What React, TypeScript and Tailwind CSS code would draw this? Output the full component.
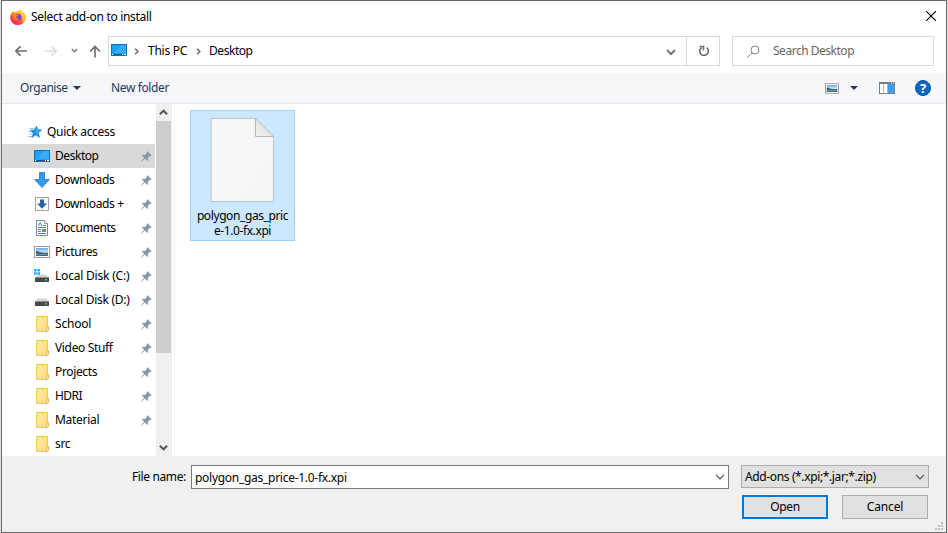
import React from 'react';

const Chevron = ({ d, color = '#555', w = 1.2, cls }: { d: 'down' | 'up' | 'right'; color?: string; w?: number; cls: string }) => (
  <svg viewBox="0 0 10 10" className={cls} fill="none" stroke={color} strokeWidth={w}>
    <path d={d === 'down' ? 'M1 3l4 4 4-4' : d === 'up' ? 'M1 7l4-4 4 4' : 'M3 1l4 4-4 4'} />
  </svg>
);

const Firefox = () => (
  <svg viewBox="0 0 16 16" className="h-4 w-4">
    <defs>
      <linearGradient id="fx" x1="0.8" y1="0" x2="0.2" y2="1">
        <stop offset="0" stopColor="#ffe83c" />
        <stop offset="0.4" stopColor="#ff9a1f" />
        <stop offset="0.75" stopColor="#ff3b47" />
        <stop offset="1" stopColor="#e81e85" />
      </linearGradient>
    </defs>
    <path d="M2.3 3.2L3.4 1.8l.5 1.7 2-.5L8.5 2 9.7 0c.5 1.8 2.2 2.3 3.6 3.7 1.2 0 2.6 2.6 2.6 4.8A7.9 7.5 0 0 1 .1 8.6C.1 6.6 1 4.8 2.3 3.2z" fill="url(#fx)" />
    <path d="M10.500.5c.8 1.500 2.300 2 3.300 3.700 2 2 2.300 5 1 7.300-.5 1-1.500 2-2.500 2.300 1.500-3.500.5-6-1.300-8z" fill="#ffd02f" opacity=".75" />
    <circle cx="8.2" cy="8.2" r="3.3" fill="#7b3ce0" />
    <path d="M3.4 5.5l3.500.2 1.600.8-1 1.100-1.600.5c.3 1.600 2.300 2 3.500 1-1 2.500-4 2.800-5.600.6z" fill="#ff8a1d" />
    <path d="M8.2 3.3c3 .2 4.600 2.600 3.700 5.500 1.900-2.200 1.500-5-.8-6.600L9.600 1z" fill="#ffd936" />
  </svg>
);

const Monitor = ({ cls = 'h-3 w-4' }: { cls?: string }) => (
  <svg viewBox="0 0 16 12" className={cls}>
    <rect x=".5" y=".5" width="15" height="11" fill="#1ba1fa" stroke="#0873b9" />
    <path d="M10 1h5v8H3z" fill="#35acfb" />
    <path d="M1 10.5h14" stroke="#075a92" />
    <path d="M1 10.5h1M11 10.5h1M13 10.5h2" stroke="#fff" />
  </svg>
);

const Star = () => (
  <svg viewBox="0 0 14 12" className="h-3 w-3.5">
    <path d="M1.500 2.500h5M0 5.500h4M1 8h3.500M0 10.500h4" stroke="#6db8e8" strokeWidth=".8" />
    <path d="M8.500 0l1.200 3.800 4.100.1-3.300 2.700.9 4.900-3.500-2.600-4.100 2.900 1.500-4.600-2.900-3 4.100-.2z" fill="#1b8fdc" stroke="#1b8fdc" strokeWidth=".6" />
    <path d="M8.300 2.500l.8 2.300 2.200.1-2 1.600.4 2.300-1.900-1.300z" fill="#46b2f2" />
  </svg>
);

const DownArrow = () => (
  <svg viewBox="0 0 16 16" className="h-4 w-4">
    <path d="M5.500.5h5v7h4.800L8 15.500.7 7.500h4.800z" fill="#3898e8" stroke="#2479bd" strokeWidth=".8" />
  </svg>
);

const DownBox = () => (
  <svg viewBox="0 0 16 16" className="h-4 w-4">
    <rect x="1.500" y="1.500" width="13" height="13" fill="#fafafa" stroke="#a3a3a3" />
    <path d="M6 3.500h4v4h3L8 12.800 3 7.500h3z" fill="#2c5fa3" />
  </svg>
);

const Doc = () => (
  <svg viewBox="0 0 16 16" className="h-4 w-4">
    <path d="M2.500.5h8l3 3v12h-11z" fill="#fff" stroke="#8a8a8a" />
    <path d="M10.500.5v3h3" fill="#eee" stroke="#8a8a8a" strokeWidth=".8" />
    <path d="M4.500 6l1.700-3.500L7.800 6M9 5.500h3M4 7.500h8M4 9.500h3M4 11.500h3M4 13.500h8" fill="none" stroke="#2b8fd0" />
    <path d="M8 9h4v3H8z" fill="#5d8fa8" />
  </svg>
);

const Picture = ({ cls = 'h-3 w-4' }: { cls?: string }) => (
  <svg viewBox="0 0 16 12" className={cls}>
    <defs>
      <linearGradient id="sky" x1="0" y1="0" x2="0" y2="1">
        <stop offset="0" stopColor="#62a8e8" />
        <stop offset=".55" stopColor="#d9eefa" />
        <stop offset="1" stopColor="#5089b9" />
      </linearGradient>
    </defs>
    <rect x=".5" y=".5" width="15" height="11" fill="#fff" stroke="#999" />
    <rect x="2" y="2" width="12" height="8" fill="url(#sky)" />
    <path d="M2 5c2-.5 3 1 5 1.300 2 .5 4 .5 7 .2v1.500H2z" fill="#3c665e" />
    <path d="M2 8.500h12V10H2z" fill="#376a9b" />
  </svg>
);

const Disk = ({ win = false }: { win?: boolean }) => (
  <svg viewBox="0 0 16 16" className="h-4 w-4">
    <path d="M4 6.500h8l3 3H1z" fill="#d3d3d3" />
    <rect x="1" y="9.500" width="14" height="4.500" rx=".7" fill="#474747" />
    <path d="M1.500 9.500h13" stroke="#888" strokeWidth=".8" />
    <rect x="11" y="11" width="2" height="1.500" fill="#35dc55" />
    {win && (
      <>
        <path d="M0 0h7v7H0z" fill="#fff" />
        <path d="M0 1h2.700v2.500H0zM3.400 1h2.700v2.500H3.400zM0 4.200h2.700v2.500H0zM3.400 4.200h2.700v2.500H3.400z" fill="#16b6f3" />
      </>
    )}
  </svg>
);

const Folder = () => (
  <svg viewBox="0 0 16 16" className="h-4 w-4">
    <defs>
      <linearGradient id="fold" x1="0" y1="0" x2="1" y2="1">
        <stop offset="0" stopColor="#ffeaa2" />
        <stop offset="1" stopColor="#fddd7c" />
      </linearGradient>
    </defs>
    <path d="M2.500.5h11v15h-11z" fill="url(#fold)" stroke="#ecc955" />
    <path d="M12.500 10.500h2v4l-1 1h-1z" fill="#ffe391" stroke="#e5bc3c" strokeWidth=".9" />
  </svg>
);

const Pin = () => (
  <svg viewBox="0 0 11 11" className="h-[11px] w-[11px]">
    <path d="M6.500.2l4 4-.8.9-1-.1-1.800 1.900.2 2.300-.9.6-2.300-2.300L.6 10.700l-.4-.4 3-3.500L.9 4.600l.7-.9 2.400.2 1.900-1.800-.2-1.100z" fill="#8a98a2" />
  </svg>
);

type Item = [string, React.ReactNode, string, boolean];
const items: Item[] = [
  ['Desktop', <Monitor />, 'tracking-[-0.45px]', true],
  ['Downloads', <DownArrow />, 'tracking-[-0.4px]', true],
  ['Downloads +', <DownBox />, 'tracking-[-0.38px]', true],
  ['Documents', <Doc />, 'tracking-[-0.45px]', true],
  ['Pictures', <Picture />, 'tracking-[-0.32px]', true],
  ['Local Disk (C:)', <Disk win />, 'tracking-[-0.2px]', true],
  ['Local Disk (D:)', <Disk />, 'tracking-[-0.27px]', true],
  ['School', <Folder />, 'tracking-[-0.2px]', true],
  ['Video Stuff', <Folder />, 'tracking-[-0.35px]', true],
  ['Projects', <Folder />, 'tracking-[-0.35px]', true],
  ['HDRI', <Folder />, 'tracking-[-0.55px]', true],
  ['Material', <Folder />, 'tracking-[-0.3px]', true],
  ['src', <Folder />, 'tracking-[-0.35px]', false],
];

function TitleBar() {
  return (
    <div className="flex h-[31px] items-center pl-[8px] pr-[10px]">
      <Firefox />
      <span className="ml-[5px] flex-1 tracking-[-0.3px]">Select add-on to install</span>
      <svg viewBox="0 0 10 10" className="mb-[2px] h-[10px] w-[10px]" stroke="#000" strokeWidth="1.1">
        <path d="M0 0l10 10M10 0L0 10" />
      </svg>
    </div>
  );
}

function AddressRow() {
  return (
    <div className="flex h-[41px] items-start pt-1">
      <div className="flex h-[30px] w-[106px] items-center">
        <svg viewBox="0 0 106 30" className="h-[30px] w-[106px]" fill="none">
          <path d="M25 15H14M18.500 10.300L13.800 15l4.700 4.700" stroke="#6e6e6e" strokeWidth="1.700" />
          <path d="M43 15h11M49.500 10.300l4.700 4.700-4.700 4.700" stroke="#dcdcdc" strokeWidth="1.700" />
          <path d="M69.800 13l2.700 2.700 2.700-2.700" stroke="#777" strokeWidth="1.500" />
          <path d="M93 21.500V10.500M88 15.500l5-5 5 5" stroke="#6e6e6e" strokeWidth="1.700" />
        </svg>
      </div>
      <div className="flex h-[30px] w-[612px] items-center border border-[#d9d9d9]">
        <Monitor cls="mb-[2px] ml-[2px] h-3 w-4" />
        <Chevron d="right" color="#666" w={2} cls="ml-[6px] h-[7px] w-[7px]" />
        <span className="ml-[8px] w-[40px] whitespace-nowrap tracking-[-0.25px]">This PC</span>
        <Chevron d="right" color="#666" w={2} cls="ml-[7px] h-[7px] w-[7px]" />
        <span className="ml-[7px] flex-1 tracking-[-0.45px]">Desktop</span>
        <Chevron d="down" color="#777" w={2} cls="mr-[10px] mt-[2px] h-[10px] w-[10px]" />
        <div className="flex h-full w-[33px] items-center justify-center border-l border-[#d9d9d9]">
          <svg viewBox="0 0 12 12" className="ml-[2px] h-3 w-3" fill="none" stroke="#6e6e6e" strokeWidth="1.600">
            <path d="M3.500 2.600A4.300 4.300 0 1 0 8.700 2.700M1.500 1.500h4V5.500" />
          </svg>
        </div>
      </div>
      <div className="ml-3 flex h-[30px] w-[202px] items-center border border-[#d9d9d9] pl-[14px] text-[#666]">
        <svg viewBox="0 0 13 13" className="h-[13px] w-[13px]" fill="none" stroke="#858585">
          <circle cx="8" cy="5" r="4" />
          <path d="M5.200 7.800L.5 12.500" />
        </svg>
        <span className="ml-[13px] tracking-[-0.48px]">Search Desktop</span>
      </div>
    </div>
  );
}

function Toolbar() {
  return (
    <div className="flex h-[31px] items-center border-b border-[#e5e7eb] bg-[#f5f6f7] pl-[18px] pr-[15px] text-[#1e395b]">
      <span className="w-[48px] tracking-[-0.48px]">Organise</span>
      <svg viewBox="0 0 8 4" className="ml-[5px] h-1 w-2"><path d="M0 0h8L4 4z" fill="#1e395b" /></svg>
      <span className="ml-[30px] flex-1 tracking-[-0.38px]">New folder</span>
      <Picture cls="h-[11px] w-[14px]" />
      <svg viewBox="0 0 8 4" className="ml-[11px] h-1 w-2"><path d="M0 0h8L4 4z" fill="#1e395b" /></svg>
      <svg viewBox="0 0 16 12" className="ml-[21px] h-3 w-4">
        <rect x=".5" y=".5" width="15" height="11" fill="#fff" stroke="#777d82" />
        <path d="M0 1h16" stroke="#777d82" strokeWidth="2" />
        <path d="M4.500 2v9.500M8.500 2v9.500" stroke="#b1b5b8" />
        <rect x="9" y="2" width="6" height="9" fill="#3d9de8" />
        <path d="M12 1h1M14 1h1" stroke="#fff" />
      </svg>
      <div className="ml-5 flex h-4 w-4 items-center justify-center rounded-full border border-[#004f9f] bg-[#0868c5] text-[13px] font-bold leading-none text-white">?</div>
    </div>
  );
}

function Sidebar() {
  return (
    <div className="flex w-[170px]">
      <div className="w-[154px] pt-4">
        <div className="flex h-6 items-center pl-[26px]">
          <Star />
          <span className="ml-[5px] tracking-[-0.32px]">Quick access</span>
        </div>
        {items.map(([label, icon, tracking, pinned], i) => (
          <div key={label} className={`flex h-6 w-[153px] items-center pl-8 pr-[3px] ${i === 0 ? 'bg-[#d9d9d9]' : ''}`}>
            {icon}
            <span className={`ml-[5px] flex-1 whitespace-nowrap ${tracking}`}>{label}</span>
            {pinned && <Pin />}
          </div>
        ))}
      </div>
      <div className="flex w-4 flex-col bg-[#f0f0f0]">
        <div className="flex h-[17px] items-center pl-[3px]"><Chevron d="up" color="#555" w={2.2} cls="h-[9px] w-[9px]" /></div>
        <div className="h-[232px] w-[15px] bg-[#cdcdcd]" />
        <div className="flex flex-1 items-end pb-[4px] pl-[3px]"><Chevron d="down" color="#555" w={2.2} cls="h-[9px] w-[9px]" /></div>
      </div>
    </div>
  );
}

function FileTile() {
  return (
    <div className="ml-[15px] mt-[6px] flex h-[131px] w-[105px] flex-col items-center border border-[#99d1ff] bg-[#cce8ff] pt-[6px]">
      <svg viewBox="0 0 65 86" className="h-[86px] w-[65px]">
        <defs>
          <linearGradient id="page" x1="0" y1="0" x2="1" y2="1">
            <stop offset="0" stopColor="#f8f8f8" />
            <stop offset="1" stopColor="#f3f5f7" />
          </linearGradient>
          <linearGradient id="curl" x1="0" y1="1" x2="1" y2="0">
            <stop offset="0" stopColor="#f4f4f4" />
            <stop offset="1" stopColor="#d7d7d7" />
          </linearGradient>
        </defs>
        <path d="M1 1.500h44.500L63.500 20v64.500H1z" fill="url(#page)" stroke="#bcc4ca" />
        <path d="M45.500 1.500V19.500h18z" fill="url(#curl)" stroke="#b7bbbe" />
      </svg>
      <div className="mt-[5px] w-[95px] break-all text-center leading-[15px] tracking-[-0.4px]">
        polygon_gas_price-1.0-fx.xpi
      </div>
    </div>
  );
}

function Footer() {
  return (
    <div className="relative flex h-[76px] bg-[#f0f0f0] pt-[9px]">
      <span className="ml-[130px] w-[59px] whitespace-nowrap pt-[3px] leading-[18px] tracking-[-0.38px]">File name:</span>
      <div className="flex h-6 w-[538px] items-center border border-[#7a7a7a] bg-white pl-[3px] pr-[3px]">
        <span className="flex-1 pt-[2px] tracking-[-0.28px]">polygon_gas_price-1.0-fx.xpi</span>
        <Chevron d="down" cls="h-[10px] w-[10px]" />
      </div>
      <div className="ml-3 w-[188px]">
        <div className="flex h-[23px] items-center border border-[#adadad] bg-[#e1e1e1] pl-[3px] pr-[3px]">
          <span className="flex-1 tracking-[-0.37px]">Add-ons (*.xpi;*.jar;*.zip)</span>
          <Chevron d="down" cls="h-[10px] w-[10px]" />
        </div>
        <div className="ml-px mt-[7px] flex gap-[14px]">
          <div className="flex h-6 w-[86px] items-center justify-center border-2 border-[#0078d7] bg-[#e1e1e1] tracking-[-0.4px]">Open</div>
          <div className="flex h-6 w-[86px] items-center justify-center border border-[#adadad] bg-[#e1e1e1] tracking-[-0.15px]">Cancel</div>
        </div>
      </div>
      <svg viewBox="0 0 8 8" className="absolute bottom-[2px] right-[3px] h-2 w-2">
        <path d="M6 0h2v2H6zM3 3h2v2H3zM6 3h2v2H6zM0 6h2v2H0zM3 6h2v2H3zM6 6h2v2H6z" fill="#bfbfbf" />
      </svg>
    </div>
  );
}

export default function App() {
  return (
    <div className="h-[533px] w-[948px] overflow-hidden bg-[#dedede] pl-px font-['Noto_Sans',sans-serif] text-[12px] leading-[18px] text-black">
      <div className="flex h-[533px] w-[946px] flex-col border border-[#6b6b6b] bg-white">
        <TitleBar />
        <AddressRow />
        <Toolbar />
        <div className="flex h-[352px]">
          <Sidebar />
          <div className="ml-[2px] flex-1 border-l border-[#f4f4f4]"><FileTile /></div>
        </div>
        <Footer />
      </div>
    </div>
  );
}
